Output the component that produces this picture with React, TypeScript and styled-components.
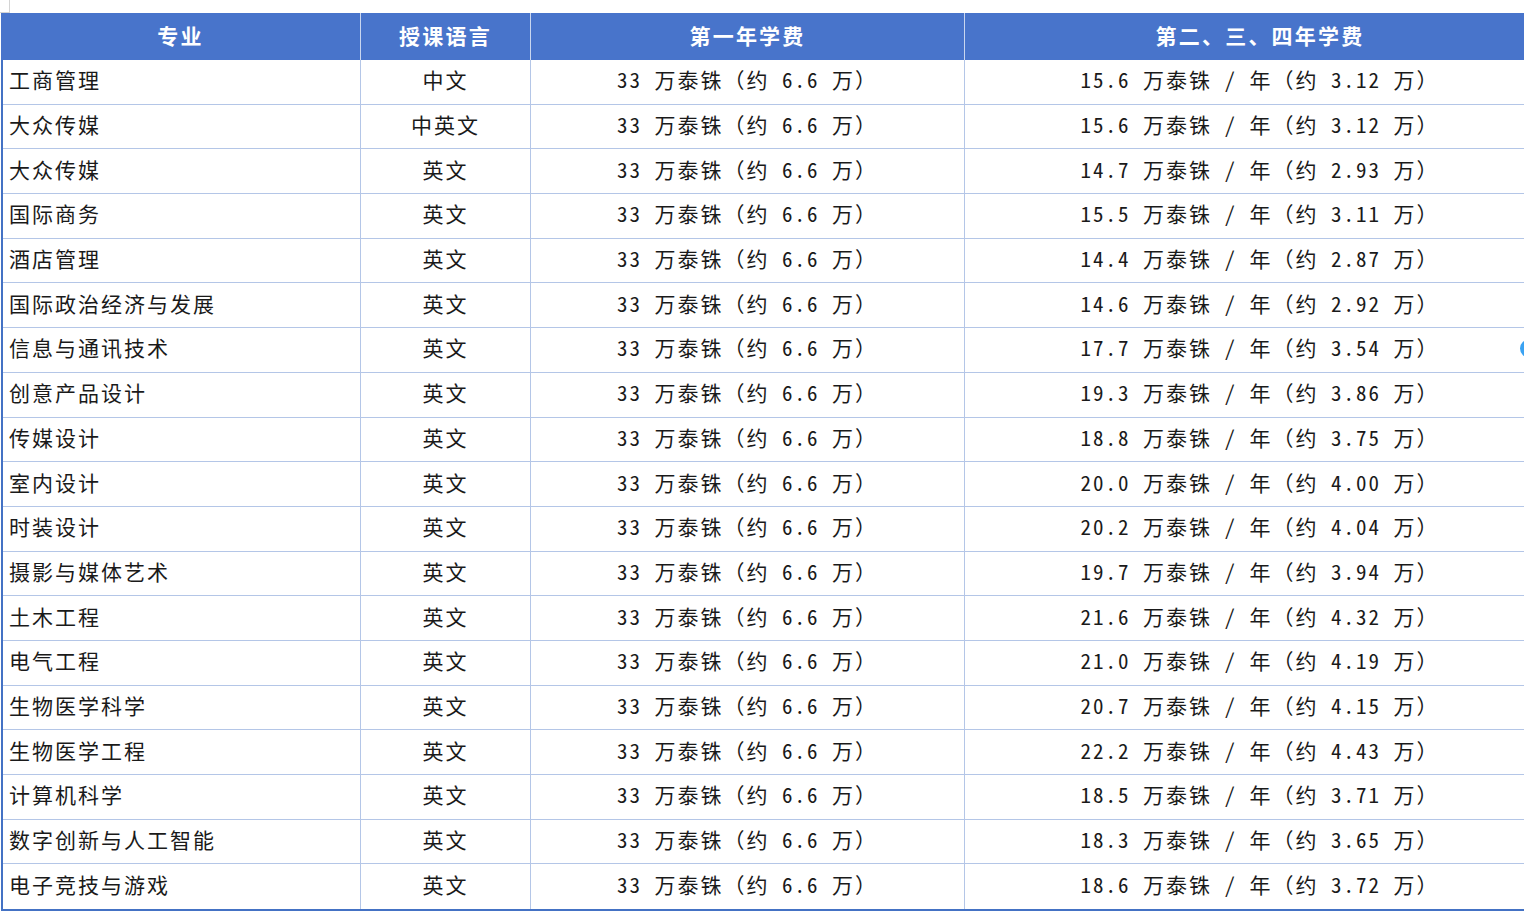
import React from 'react'
import styled, { createGlobalStyle } from 'styled-components'

type Fee = {
    major: string
    lang: string
    first: string
    later: string
}

const fees: Fee[] = [
    { major: '工商管理', lang: '中文', first: '33', later: '15.6|3.12' },
    { major: '大众传媒', lang: '中英文', first: '33', later: '15.6|3.12' },
    { major: '大众传媒', lang: '英文', first: '33', later: '14.7|2.93' },
    { major: '国际商务', lang: '英文', first: '33', later: '15.5|3.11' },
    { major: '酒店管理', lang: '英文', first: '33', later: '14.4|2.87' },
    { major: '国际政治经济与发展', lang: '英文', first: '33', later: '14.6|2.92' },
    { major: '信息与通讯技术', lang: '英文', first: '33', later: '17.7|3.54' },
    { major: '创意产品设计', lang: '英文', first: '33', later: '19.3|3.86' },
    { major: '传媒设计', lang: '英文', first: '33', later: '18.8|3.75' },
    { major: '室内设计', lang: '英文', first: '33', later: '20.0|4.00' },
    { major: '时装设计', lang: '英文', first: '33', later: '20.2|4.04' },
    { major: '摄影与媒体艺术', lang: '英文', first: '33', later: '19.7|3.94' },
    { major: '土木工程', lang: '英文', first: '33', later: '21.6|4.32' },
    { major: '电气工程', lang: '英文', first: '33', later: '21.0|4.19' },
    { major: '生物医学科学', lang: '英文', first: '33', later: '20.7|4.15' },
    { major: '生物医学工程', lang: '英文', first: '33', later: '22.2|4.43' },
    { major: '计算机科学', lang: '英文', first: '33', later: '18.5|3.71' },
    { major: '数字创新与人工智能', lang: '英文', first: '33', later: '18.3|3.65' },
    { major: '电子竞技与游戏', lang: '英文', first: '33', later: '18.6|3.72' },
]

const GlobalStyle = createGlobalStyle`
  html, body {
    margin: 0;
    background: #fff;
    overflow: hidden;
  }
  body {
    font-family: "Noto Sans Mono CJK SC", "Noto Sans CJK SC", "DejaVu Sans", sans-serif;
  }
`

const Page = styled.div`
  position: relative;
  width: 1524px;
  height: 912px;
  padding: 13px 0 0 1px;
  box-sizing: border-box;
  overflow: hidden;
`

const CellCorner = styled.div`
  position: absolute;
  left: 0;
  top: 0;
  width: 9px;
  height: 12px;
  border-right: 1px solid #d4d4d4;
  border-bottom: 1px solid #d4d4d4;
`

const FloatDot = styled.div`
  position: absolute;
  left: 1520px;
  top: 339px;
  width: 20px;
  height: 19px;
  border-radius: 50%;
  background: #3aa2f2;
`

const Table = styled.div`
  width: 1554px;
  display: flex;
  flex-direction: column;
`

const HeadRow = styled.div`
  display: grid;
  grid-template-columns: 360px 170px 434px 1fr;
  height: 47px;
  background: #4874cb;
`

const HeadCell = styled.div`
  display: flex;
  align-items: center;
  justify-content: center;
  padding-bottom: 4px;
  box-sizing: border-box;
  color: #fff;
  font-size: 21px;
  font-weight: 700;
  letter-spacing: 2.2px;
  border-right: 1px solid #c9d6ef;
  &:last-child {
    border-right: none;
  }
`

const Body = styled.div`
  border-left: 2px solid #4472c4;
  border-bottom: 2px solid #4472c4;
`

const Row = styled.div`
  display: grid;
  grid-template-columns: 358px 170px 434px 1fr;
  height: 44.7px;
  box-sizing: border-box;
  border-bottom: 1px solid #b4c6e7;
  &:last-child {
    border-bottom: none;
  }
`

const Cell = styled.div<{ $left?: boolean }>`
  display: flex;
  align-items: center;
  justify-content: ${({ $left }) => ($left ? 'flex-start' : 'center')};
  padding-left: ${({ $left }) => ($left ? '6px' : '0')};
  padding-bottom: 5px;
  box-sizing: border-box;
  border-right: 1px solid #b4c6e7;
  font-size: 21px;
  font-weight: 300;
  letter-spacing: 2px;
  color: #1a1a1a;
  white-space: pre;
  &:last-child {
    border-right: none;
  }
`

function App() {
    return (
        <>
            <GlobalStyle />
            <Page>
                <CellCorner />
                <Table>
                    <HeadRow>
                        <HeadCell>专业</HeadCell>
                        <HeadCell>授课语言</HeadCell>
                        <HeadCell>第一年学费</HeadCell>
                        <HeadCell>第二、三、四年学费</HeadCell>
                    </HeadRow>
                    <Body>
                        {fees.map((val, key) => {
                            const [yearly, rmb] = val.later.split('|')
                            return (
                                <Row key={key}>
                                    <Cell $left>{val.major}</Cell>
                                    <Cell>{val.lang}</Cell>
                                    <Cell>{`${val.first} 万泰铢（约 6.6 万）`}</Cell>
                                    <Cell>{`${yearly} 万泰铢 / 年（约 ${rmb} 万）`}</Cell>
                                </Row>
                            )
                        })}
                    </Body>
                </Table>
                <FloatDot />
            </Page>
        </>
    )
}

export default App
